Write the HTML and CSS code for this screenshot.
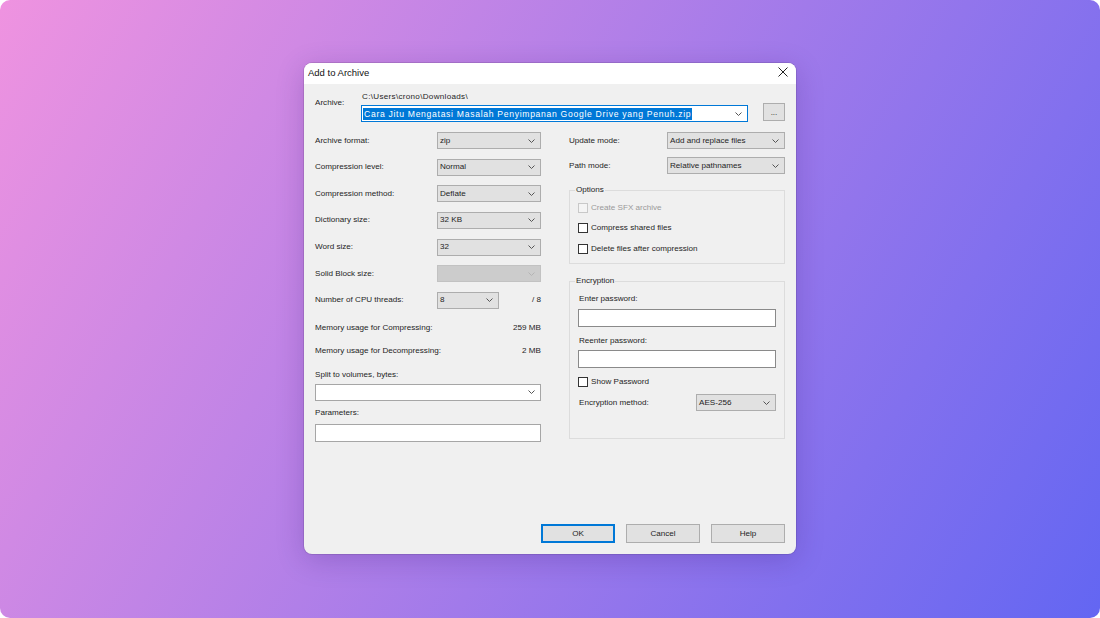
FILE: index.html
```html
<!DOCTYPE html>
<html lang="en">
<head>
<meta charset="utf-8">
<title>Add to Archive</title>
<link rel="stylesheet" href="styles.css">
</head>
<body>
<div class="page">
  <div class="dialog">
    <div class="titlebar">
      <span class="title">Add to Archive</span>
      <svg class="close" width="10" height="10" viewBox="0 0 10 10"><path d="M0.5 0.5 L9.5 9.5 M9.5 0.5 L0.5 9.5" stroke="#222" stroke-width="1" fill="none"/></svg>
    </div>
    <div class="body">
      <div class="archive-row">
        <div class="archive-label">Archive:</div>
        <div class="archive-main">
          <div class="path">C:\Users\crono\Downloads\</div>
          <div class="combo combo-focus">
            <span class="sel">Cara Jitu Mengatasi Masalah Penyimpanan Google Drive yang Penuh.zip</span>
            <svg class="chev" width="7" height="4" viewBox="0 0 7 4"><polyline points="0.5,0.5 3.5,3.5 6.5,0.5" fill="none" stroke="#555" stroke-width="1"/></svg>
          </div>
        </div>
        <div class="btn browse">...</div>
      </div>

      <div class="columns">
        <div class="col-left">
          <div class="frow"><span class="flabel">Archive format:</span><div class="select"><span>zip</span><svg class="chev" width="7" height="4" viewBox="0 0 7 4"><polyline points="0.5,0.5 3.5,3.5 6.5,0.5" fill="none" stroke="#555" stroke-width="1"/></svg></div></div>
          <div class="frow"><span class="flabel">Compression level:</span><div class="select"><span>Normal</span><svg class="chev" width="7" height="4" viewBox="0 0 7 4"><polyline points="0.5,0.5 3.5,3.5 6.5,0.5" fill="none" stroke="#555" stroke-width="1"/></svg></div></div>
          <div class="frow"><span class="flabel">Compression method:</span><div class="select"><span>Deflate</span><svg class="chev" width="7" height="4" viewBox="0 0 7 4"><polyline points="0.5,0.5 3.5,3.5 6.5,0.5" fill="none" stroke="#555" stroke-width="1"/></svg></div></div>
          <div class="frow"><span class="flabel">Dictionary size:</span><div class="select"><span>32 KB</span><svg class="chev" width="7" height="4" viewBox="0 0 7 4"><polyline points="0.5,0.5 3.5,3.5 6.5,0.5" fill="none" stroke="#555" stroke-width="1"/></svg></div></div>
          <div class="frow"><span class="flabel">Word size:</span><div class="select"><span>32</span><svg class="chev" width="7" height="4" viewBox="0 0 7 4"><polyline points="0.5,0.5 3.5,3.5 6.5,0.5" fill="none" stroke="#555" stroke-width="1"/></svg></div></div>
          <div class="frow"><span class="flabel">Solid Block size:</span><div class="select disabled"><span></span><svg class="chev" width="7" height="4" viewBox="0 0 7 4"><polyline points="0.5,0.5 3.5,3.5 6.5,0.5" fill="none" stroke="#b4b4b4" stroke-width="1"/></svg></div></div>
          <div class="frow last"><span class="flabel">Number of CPU threads:</span><div class="select small"><span>8</span><svg class="chev" width="7" height="4" viewBox="0 0 7 4"><polyline points="0.5,0.5 3.5,3.5 6.5,0.5" fill="none" stroke="#555" stroke-width="1"/></svg></div><span class="of">/ 8</span></div>

          <div class="mrow m1"><span>Memory usage for Compressing:</span><span>259 MB</span></div>
          <div class="mrow m2"><span>Memory usage for Decompressing:</span><span>2 MB</span></div>

          <div class="blabel split-label">Split to volumes, bytes:</div>
          <div class="combo combo-white"><span></span><svg class="chev" width="7" height="4" viewBox="0 0 7 4"><polyline points="0.5,0.5 3.5,3.5 6.5,0.5" fill="none" stroke="#555" stroke-width="1"/></svg></div>
          <div class="blabel params-label">Parameters:</div>
          <div class="textbox params"></div>
        </div>

        <div class="col-right">
          <div class="rrow"><span class="rlabel">Update mode:</span><div class="select wide"><span>Add and replace files</span><svg class="chev" width="7" height="4" viewBox="0 0 7 4"><polyline points="0.5,0.5 3.5,3.5 6.5,0.5" fill="none" stroke="#555" stroke-width="1"/></svg></div></div>
          <div class="rrow second"><span class="rlabel">Path mode:</span><div class="select wide"><span>Relative pathnames</span><svg class="chev" width="7" height="4" viewBox="0 0 7 4"><polyline points="0.5,0.5 3.5,3.5 6.5,0.5" fill="none" stroke="#555" stroke-width="1"/></svg></div></div>

          <fieldset class="group options">
            <legend>Options</legend>
            <div class="check disabled"><span class="box"></span><span>Create SFX archive</span></div>
            <div class="check c2"><span class="box"></span><span>Compress shared files</span></div>
            <div class="check c3"><span class="box"></span><span>Delete files after compression</span></div>
          </fieldset>

          <fieldset class="group encryption">
            <legend>Encryption</legend>
            <div class="elabel">Enter password:</div>
            <div class="textbox pw"></div>
            <div class="elabel re">Reenter password:</div>
            <div class="textbox pw pw2"></div>
            <div class="check show"><span class="box"></span><span>Show Password</span></div>
            <div class="erow"><span class="emlabel">Encryption method:</span><div class="select aes"><span>AES-256</span><svg class="chev" width="7" height="4" viewBox="0 0 7 4"><polyline points="0.5,0.5 3.5,3.5 6.5,0.5" fill="none" stroke="#555" stroke-width="1"/></svg></div></div>
          </fieldset>
        </div>
      </div>

      <div class="buttons">
        <div class="btn action ok">OK</div>
        <div class="btn action">Cancel</div>
        <div class="btn action">Help</div>
      </div>
    </div>
  </div>
</div>
</body>
</html>
```

FILE: styles.css
```css
* { box-sizing: border-box; }

html, body {
  margin: 0;
  padding: 0;
  width: 1100px;
  height: 618px;
  background: #ffffff;
  overflow: hidden;
}

body {
  font-family: "Liberation Sans", Arial, sans-serif;
  font-size: 8.1px;
  line-height: 12px;
  color: #1e1e1e;
}

.page {
  width: 1100px;
  height: 618px;
  border-radius: 10px;
  background: linear-gradient(120deg, #ef93e0 0%, #6366f2 100%);
  display: flex;
  align-items: center;
  justify-content: center;
}

.dialog {
  width: 492px;
  height: 491px;
  margin-top: -1px;
  border-radius: 8px;
  background: #f0f0f0;
  box-shadow: 0 6px 28px rgba(50, 20, 110, 0.22), 0 0 0 1px rgba(0, 0, 0, 0.10);
  display: flex;
  flex-direction: column;
  overflow: hidden;
}

.titlebar {
  height: 21px;
  background: #ffffff;
  display: flex;
  align-items: flex-start;
  justify-content: space-between;
  padding: 3px 8px 0 4px;
}

.title {
  font-size: 9.5px;
  line-height: 13px;
  color: #111;
}

.close {
  margin-top: 1px;
}

.body {
  flex: 1;
  display: flex;
  flex-direction: column;
  padding: 7px 11px 11px 11px;
}

/* archive row */
.archive-row {
  display: flex;
  align-items: flex-start;
}

.archive-label {
  width: 46px;
  margin-top: 6px;
}

.archive-main {
  width: 387px;
}

.path {
  line-height: 11px;
  padding-left: 1px;
  letter-spacing: 0.3px;
}

.combo {
  height: 17px;
  display: flex;
  align-items: center;
  justify-content: space-between;
  background: #ffffff;
  border: 1px solid #a6a6a6;
  padding: 0 5px 0 1px;
}

.combo-focus {
  margin-top: 3px;
  border-color: #0078d7;
}

.sel {
  background: #0078d7;
  color: #ffffff;
  font-size: 8.6px;
  letter-spacing: 0.7px;
  line-height: 12px;
  padding: 0 1px;
}

.chev {
  display: block;
  flex: none;
}

.btn {
  background: #e1e1e1;
  border: 1px solid #adadad;
  display: flex;
  align-items: center;
  justify-content: center;
  color: #1e1e1e;
}

.browse {
  width: 22px;
  height: 18px;
  margin-left: 15px;
  margin-top: 12px;
  padding-top: 2px;
}

/* columns */
.columns {
  display: flex;
  gap: 28px;
  margin-top: 10px;
}

.col-left {
  width: 226px;
  display: flex;
  flex-direction: column;
}

.col-right {
  width: 216px;
  display: flex;
  flex-direction: column;
}

.frow {
  display: flex;
  align-items: center;
  height: 17px;
  margin-bottom: 9.67px;
}

.frow.last {
  margin-bottom: 0;
}

.flabel {
  width: 122px;
}

.select {
  width: 104px;
  height: 17px;
  display: flex;
  align-items: center;
  justify-content: space-between;
  background: #e1e1e1;
  border: 1px solid #adadad;
  padding: 0 5px 0 2px;
}

.select.disabled {
  background: #cccccc;
  border-color: #c2c2c2;
}

.select.small {
  width: 62px;
}

.of {
  margin-left: auto;
}

.mrow {
  display: flex;
  justify-content: space-between;
}

.m1 { margin-top: 13px; }
.m2 { margin-top: 11px; }

.split-label { margin-top: 12px; }

.combo-white {
  margin-top: 3px;
}

.params-label { margin-top: 6px; }

.textbox {
  height: 18px;
  background: #ffffff;
  border: 1px solid #a6a6a6;
}

.params { margin-top: 5px; }

/* right column */
.rrow {
  display: flex;
  align-items: center;
  height: 17px;
}

.rrow.second { margin-top: 8px; }

.rlabel { width: 98px; }

.select.wide { width: 118px; }

.group {
  margin: 0;
  border: 1px solid #dcdcdc;
  padding: 0 8px 0 8px;
  min-width: 0;
}

.group legend {
  padding: 0 1px;
  margin-left: -3px;
  line-height: 12px;
}

.options {
  margin-top: 10px;
  padding-top: 6px;
  padding-bottom: 8px;
}

.check {
  display: flex;
  align-items: center;
  height: 12px;
  gap: 3px;
}

.check .box {
  width: 10px;
  height: 10px;
  background: #ffffff;
  border: 1px solid #333333;
}

.check.disabled {
  color: #9a9a9a;
}

.check.disabled .box {
  border-color: #c8c8c8;
  background: #f4f4f4;
}

.c2 { margin-top: 8px; }
.c3 { margin-top: 9px; }

.encryption {
  margin-top: 11px;
  padding-top: 6px;
  padding-bottom: 27px;
}

.elabel {
  padding-left: 1px;
}

.elabel.re { margin-top: 8px; }

.pw {
  width: 198px;
  margin-top: 4px;
  border-color: #8a8a8a;
}

.pw2 { margin-top: 3px; }

.show { margin-top: 8px; }

.erow {
  display: flex;
  align-items: center;
  margin-top: 6px;
}

.emlabel {
  width: 118px;
  padding-left: 1px;
}

.select.aes { width: 80px; }

/* buttons */
.buttons {
  margin-top: auto;
  display: flex;
  justify-content: flex-end;
  gap: 11px;
}

.action {
  width: 74px;
  height: 19px;
}

.ok {
  border: 2px solid #0078d7;
}
```
